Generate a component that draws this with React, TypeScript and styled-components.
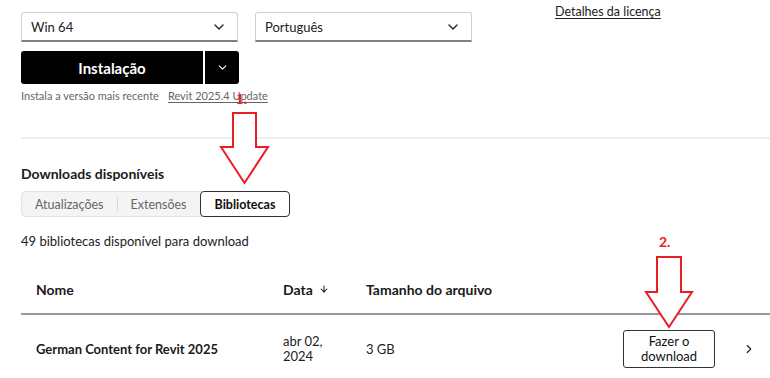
import React from "react";
import styled, {createGlobalStyle} from "styled-components";
import {ChevronDown, ChevronRight, ArrowDown} from "lucide-react";

const GlobalStyle = createGlobalStyle`
  body {
    margin: 0;
    background: #fff;
    font-family: Lato, "Open Sans", sans-serif;
    color: #1a1a1a;
  }
`;

const Page = styled.div`
  position: relative;
  width: 770px;
  height: 378px;
  overflow: hidden;
  padding: 4px 0 0 21px;
  box-sizing: border-box;
`;

const TopRow = styled.div`
  display: grid;
  grid-template-columns: 217px 217px 1fr;
  column-gap: 17px;
  align-items: start;
`;

const Select = styled.div`
  margin-top: 8px;
  height: 30px;
  box-sizing: border-box;
  display: flex;
  align-items: center;
  justify-content: space-between;
  padding: 0 10px 0 9px;
  border: 1px solid #d0d0d0;
  border-bottom: 2px solid #808080;
  border-radius: 3px 3px 0 0;
  font-size: 13px;
  color: #222;
`;

const LicenseLink = styled.a`
  padding-left: 66px;
  font-size: 12.5px;
  color: #222;
  text-decoration: underline;
  text-underline-offset: 2px;
  line-height: 16px;
`;

const InstallGroup = styled.div`
  display: flex;
  gap: 2px;
  margin-top: 9px;
  height: 33px;
`;

const InstallButton = styled.button<{$wide?: boolean}>`
  width: ${p => (p.$wide ? "182px" : "34px")};
  height: 100%;
  background: #000;
  color: #fff;
  border: none;
  border-radius: ${p => (p.$wide ? "3px 0 0 3px" : "0 3px 3px 0")};
  font-family: inherit;
  font-size: 15px;
  font-weight: 700;
  display: flex;
  align-items: center;
  justify-content: center;
  padding: 0;
`;

const Helper = styled.div`
  margin-top: 4px;
  font-size: 11px;
  color: #666;
  display: flex;
  gap: 9px;
  line-height: 16px;
`;

const HelperLink = styled.a`
  color: #666;
  text-decoration: underline;
  text-underline-offset: 2px;
`;

const Divider = styled.hr`
  margin: 33px 0 0 0;
  border: none;
  height: 2px;
  background: #efefef;
`;

const Heading = styled.h3`
  margin: 26px 0 0 0;
  font-size: 14px;
  font-weight: 700;
  line-height: 18px;
`;

const Tabs = styled.div`
  margin-top: 8px;
  display: inline-flex;
  align-items: center;
  height: 26px;
  box-sizing: border-box;
  background: #f4f4f4;
  border: 1px solid #e3e3e3;
  border-radius: 4px;
`;

const Tab = styled.div<{$active?: boolean}>`
  height: ${p => (p.$active ? "26px" : "auto")};
  box-sizing: border-box;
  display: flex;
  align-items: center;
  padding: 0 ${p => (p.$active ? "14px" : "13px")};
  font-size: 12.5px;
  color: ${p => (p.$active ? "#111" : "#666")};
  font-weight: ${p => (p.$active ? 700 : 400)};
  background: ${p => (p.$active ? "#fff" : "transparent")};
  border: ${p => (p.$active ? "1px solid #333" : "none")};
  border-radius: 4px;
  margin-right: ${p => (p.$active ? "-1px" : "0")};
`;

const TabSep = styled.span`
  width: 1px;
  height: 14px;
  background: #d8d8d8;
`;

const Count = styled.div`
  margin-top: 16px;
  font-size: 13px;
  line-height: 16px;
  color: #222;
`;

const TableRow = styled.div<{$header?: boolean}>`
  display: grid;
  grid-template-columns: 247px 83px 1fr 92px 55px;
  padding-left: 15px;
  align-items: center;
  height: ${p => (p.$header ? "48px" : "68px")};
  border-bottom: ${p => (p.$header ? "2px solid #9a9a9a" : "none")};
  margin-top: ${p => (p.$header ? "16px" : "0")};
  font-size: 13px;
`;

const HeadCell = styled.div`
  font-size: 14px;
  font-weight: 700;
  display: flex;
  align-items: center;
  gap: 6px;
`;

const NameCell = styled.div`
  font-weight: 700;
`;

const Cell = styled.div`
  line-height: 15px;
  color: #222;
`;

const DownloadButton = styled.button`
  width: 92px;
  height: 38px;
  background: #fff;
  border: 1px solid #333;
  border-radius: 3px;
  font-family: inherit;
  font-size: 13px;
  line-height: 15px;
  color: #111;
  padding: 0;
`;

const Chevron = styled.div`
  display: flex;
  justify-content: flex-end;
  padding-right: 14px;
`;

const Overlay = styled.svg`
  position: absolute;
  left: 0;
  top: 0;
  pointer-events: none;
`;

const Mark = styled.span<{$serif?: boolean; $x: number; $y: number}>`
  position: absolute;
  left: ${p => p.$x}px;
  top: ${p => p.$y}px;
  color: #ec1c24;
  font-weight: 700;
  font-size: ${p => (p.$serif ? "15px" : "14px")};
  font-family: ${p => (p.$serif ? '"Liberation Serif", serif' : 'Lato, sans-serif')};
  line-height: 14px;
`;

const App: React.FC = () => {
  return (
    <Page>
      <GlobalStyle/>
      <TopRow>
        <Select>
          <span>Win 64</span>
          <ChevronDown size={16} strokeWidth={2} color="#222"/>
        </Select>
        <Select>
          <span>Português</span>
          <ChevronDown size={16} strokeWidth={2} color="#222"/>
        </Select>
        <LicenseLink>Detalhes da licença</LicenseLink>
      </TopRow>
      <InstallGroup>
        <InstallButton $wide>Instalação</InstallButton>
        <InstallButton>
          <ChevronDown size={13} strokeWidth={2} color="#fff"/>
        </InstallButton>
      </InstallGroup>
      <Helper>
        <span>Instala a versão mais recente</span>
        <HelperLink>Revit 2025.4 Update</HelperLink>
      </Helper>
      <Divider/>
      <Heading>Downloads disponíveis</Heading>
      <Tabs>
        <Tab>Atualizações</Tab>
        <TabSep/>
        <Tab>Extensões</Tab>
        <Tab $active>Bibliotecas</Tab>
      </Tabs>
      <Count>49 bibliotecas disponível para download</Count>
      <TableRow $header>
        <HeadCell>Nome</HeadCell>
        <HeadCell>
          Data <ArrowDown size={10} strokeWidth={2.5}/>
        </HeadCell>
        <HeadCell>Tamanho do arquivo</HeadCell>
        <div/>
        <div/>
      </TableRow>
      <TableRow>
        <NameCell>German Content for Revit 2025</NameCell>
        <Cell>
          abr 02,
          <br/>
          2024
        </Cell>
        <Cell>3 GB</Cell>
        <DownloadButton>
          Fazer o
          <br/>
          download
        </DownloadButton>
        <Chevron>
          <ChevronRight size={14} strokeWidth={2} color="#222"/>
        </Chevron>
      </TableRow>

      <Overlay width={770} height={378}>
        <path
          d="M233 113 L256 113 L256 147 L268 147 L244.5 183 L221 147 L233 147 Z"
          fill="#fff"
          stroke="#ec1c24"
          strokeWidth={2}
          strokeLinejoin="miter"
        />
        <path
          d="M657 257 L681 257 L681 292 L692 292 L669 327 L646 292 L657 292 Z"
          fill="#fff"
          stroke="#ec1c24"
          strokeWidth={2}
          strokeLinejoin="miter"
        />
      </Overlay>
      <Mark $serif $x={236} $y={92}>1.</Mark>
      <Mark $x={659} $y={235}>2.</Mark>
    </Page>
  );
};

export default App;
